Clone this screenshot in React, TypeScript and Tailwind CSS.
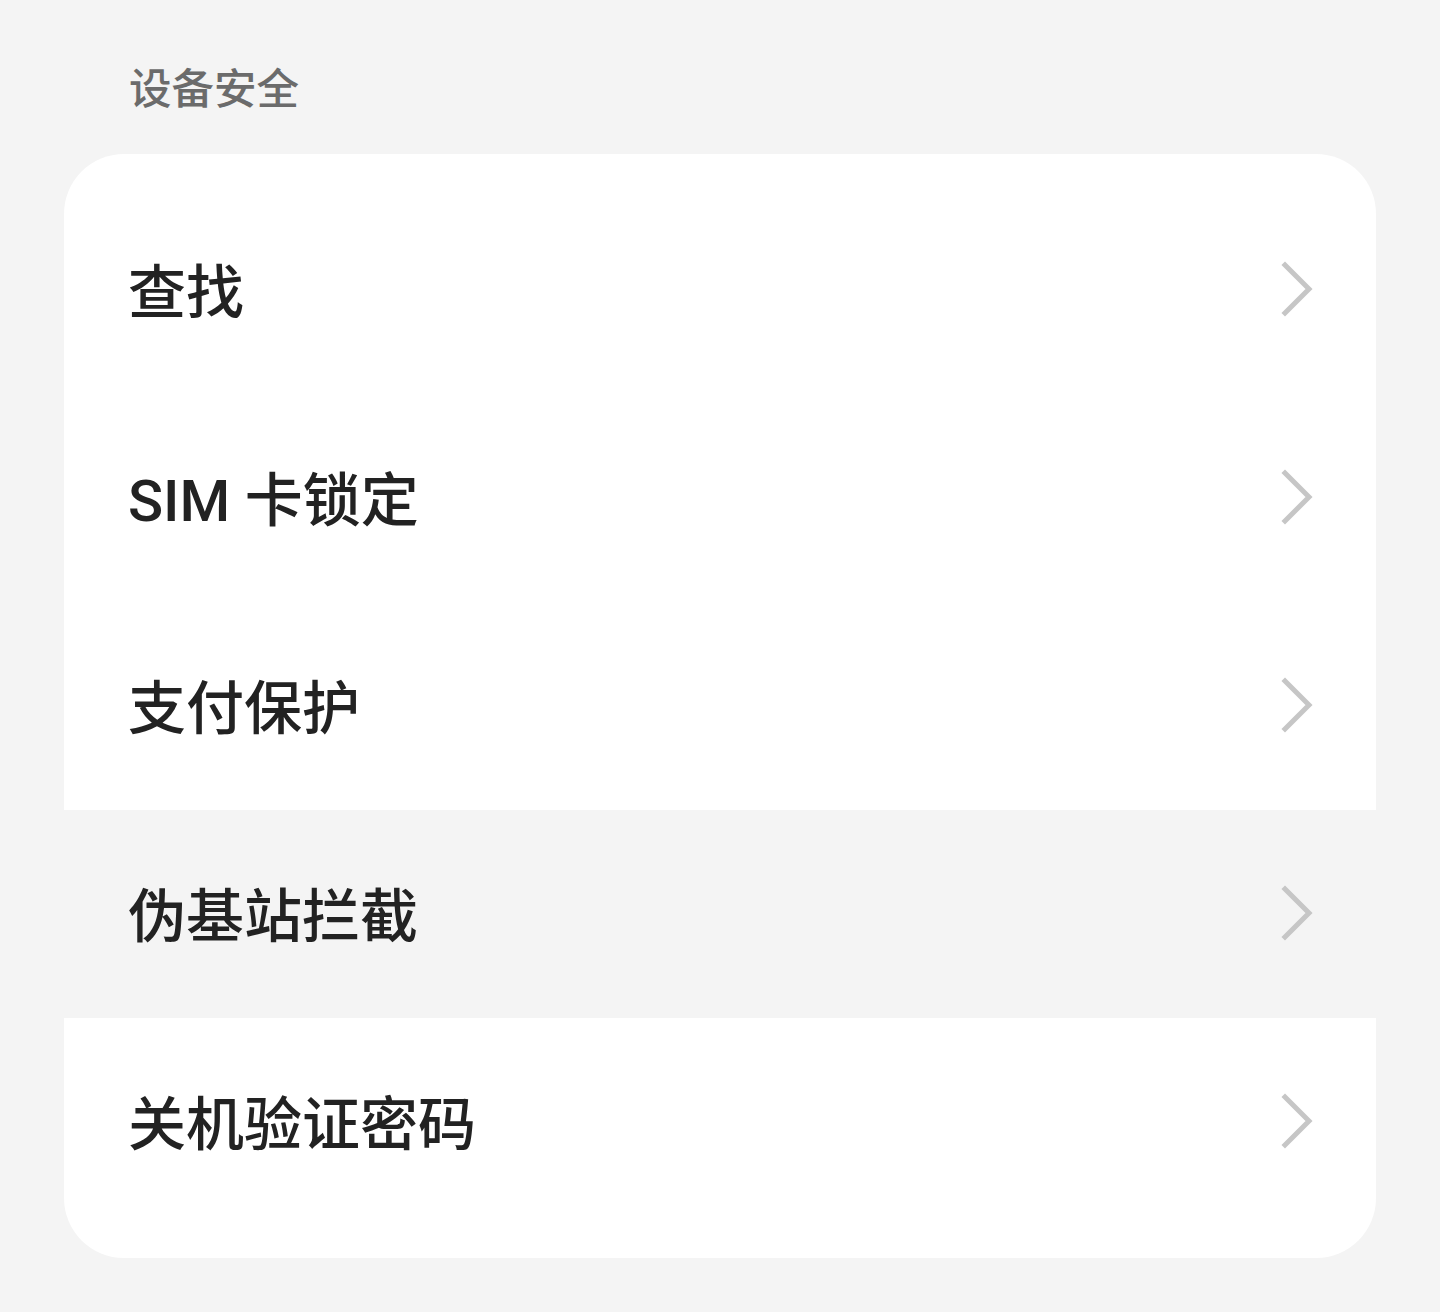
const items = ["查找", "SIM 卡锁定", "支付保护", "伪基站拦截", "关机验证密码"];

function Chevron() {
  return (
    <svg width="40" height="60" viewBox="0 0 40 60" fill="none">
      <path d="M7 5 L31 29 L7 53" stroke="#c6c6c6" strokeWidth="5" strokeLinecap="square" strokeLinejoin="miter" />
    </svg>
  );
}

export default function App() {
  return (
    <div
      className="min-h-[1312px] w-[1440px] bg-[#f4f4f4] px-16"
      style={{ fontFamily: 'Roboto, "Noto Sans CJK SC", sans-serif' }}
    >
      <div className="h-[154px] pl-[65px] pt-[62px]">
        <h2 className="text-[42.5px] font-medium leading-[56px] text-[#6b6b6b]">设备安全</h2>
      </div>
      <div className="overflow-hidden rounded-[60px] bg-white py-8">
        {items.map((label, i) => (
          <div
            key={label}
            className={`flex h-[208px] items-center justify-between pl-[64px] pr-[58px] ${i === 3 ? "bg-[#f4f4f4]" : ""}`}
          >
            <span className="pt-[5px] text-[58px] font-medium leading-none text-[#222222]">{label}</span>
            <Chevron />
          </div>
        ))}
      </div>
    </div>
  );
}
